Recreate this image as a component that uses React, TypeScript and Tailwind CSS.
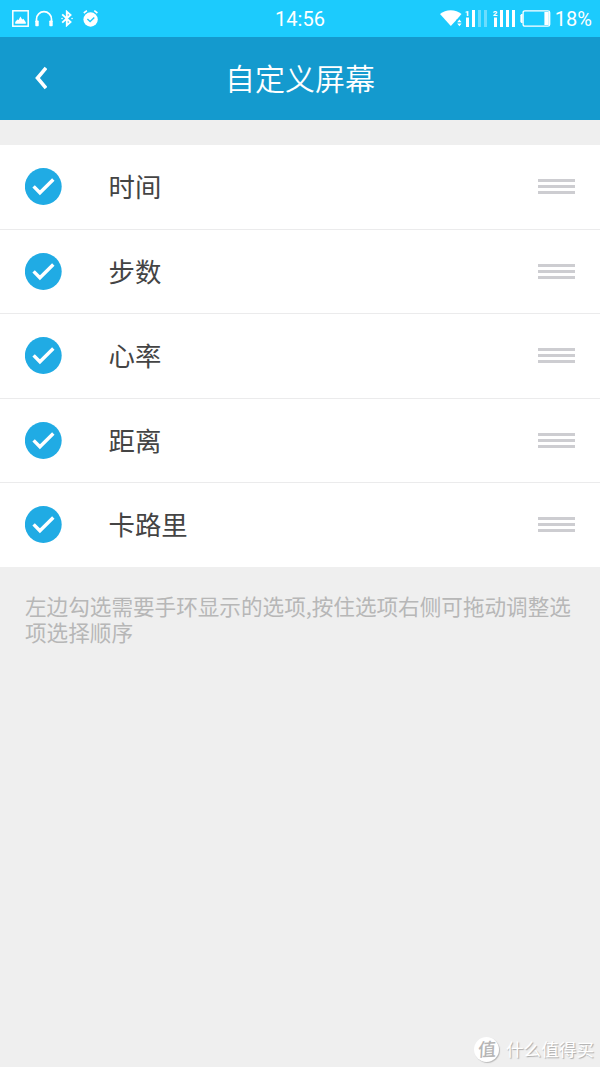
const OPTIONS = [
  { id: "time", label: "时间" },
  { id: "steps", label: "步数" },
  { id: "heart", label: "心率" },
  { id: "distance", label: "距离" },
  { id: "calories", label: "卡路里" },
];

const PictureIcon = () => (
  <svg className="w-[17px] h-[17px]" viewBox="0 0 17 17" fill="none">
    <rect x="0.8" y="0.8" width="15.4" height="15.4" stroke="white" strokeWidth="1.5" />
    <path d="M3.2 13.8V12l2.2-2.6 1.2.6L8.4 6.6l1.8 2.8 1.2-.6 2.4 3.4v1.6z" fill="white" />
  </svg>
);

const HeadphonesIcon = () => (
  <svg className="w-[18px] h-[17px]" viewBox="0 0 18 17" fill="none">
    <path d="M1.5 12V9.2a7.5 7.5 0 0 1 15 0V12" stroke="white" strokeWidth="1.7" />
    <rect x="0.3" y="10.4" width="3.4" height="5.8" rx="0.8" fill="white" />
    <rect x="14.3" y="10.4" width="3.4" height="5.8" rx="0.8" fill="white" />
  </svg>
);

const BluetoothIcon = () => (
  <svg className="w-3 h-[17px]" viewBox="0 0 12 17" fill="none" stroke="white" strokeWidth="1.9">
    <path d="M1.2 4.4l8.3 7.7-3.7 3.2V1.7l3.7 3.2-8.3 7.7" />
    <path d="M1 8.5h.1M11 8.5h.1" strokeLinecap="round" strokeWidth="1.5" />
  </svg>
);

const AlarmIcon = () => (
  <svg className="w-4 h-[17px]" viewBox="0 0 16 17" fill="none">
    <circle cx="7.6" cy="9.5" r="7.2" fill="white" />
    <path d="M.8 3L3.9.7M14.4 3L11.3.7" stroke="white" strokeWidth="1.6" />
    <path d="M4.4 9l2.7 2.5 4.2-4" stroke="#1ccbfd" strokeWidth="1.4" />
  </svg>
);

const WifiIcon = () => (
  <svg className="w-[22px] h-[17px]" viewBox="0 0 22 17" fill="white">
    <path d="M0 4C5.5-1.1 16-1.1 21.5 4L16.8 9.4 10.8 16z" />
    <path d="M16.6 9.2h6v8h-6z" fill="#1ccbfd" />
    <path d="M17.2 12.2l2.2-2.8 2.2 2.8zM17.2 13.4l2.2 2.8 2.2-2.8z" />
  </svg>
);

const SignalIcon = ({ slot, level }: { slot: string; level: number }) => (
  <svg className="w-[23px] h-[17px] overflow-visible" viewBox="0 0 23 17" fill="white">
    <text x="-0.3" y="6" fontSize="8" fontWeight="900" fontFamily="Roboto, sans-serif">
      {slot}
    </text>
    <rect x="1" y="7.5" width="3" height="9.5" />
    {[2, 3, 4].map((bar) => (
      <rect key={bar} x={bar * 6 - 5} y="0" width="3" height="17" opacity={bar <= level ? 1 : 0.35} />
    ))}
  </svg>
);

const BatteryIcon = () => (
  <svg className="w-[31px] h-[17px]" viewBox="0 0 31 17" fill="none">
    <rect x="3.1" y="0.8" width="26.6" height="15.4" rx="1.8" stroke="white" strokeWidth="1.3" />
    <path d="M2.6 4H1.3L.4 5.2v6.6L1.3 13h1.3z" fill="white" />
    <rect x="24.4" y="2" width="4.4" height="13" fill="white" />
  </svg>
);

const StatusBar = () => (
  <div className="h-[37px] grid grid-cols-[1fr_auto_1fr] items-center bg-[#1ccbfd] pl-3 pr-2 font-[Roboto,sans-serif] text-[20px] leading-none text-white">
    <div className="flex items-center">
      <PictureIcon />
      <div className="ml-1.5">
        <HeadphonesIcon />
      </div>
      <div className="ml-2">
        <BluetoothIcon />
      </div>
      <div className="ml-[10px]">
        <AlarmIcon />
      </div>
    </div>
    <span className="mr-1">14:56</span>
    <div className="flex items-center justify-end">
      <WifiIcon />
      <div className="ml-[3px]">
        <SignalIcon slot="1" level={2} />
      </div>
      <div className="ml-[5px]">
        <SignalIcon slot="2" level={4} />
      </div>
      <div className="ml-1">
        <BatteryIcon />
      </div>
      <span className="ml-1">18%</span>
    </div>
  </div>
);

const OptionRow = ({ label }: { label: string }) => (
  <li className="h-[84.5px] flex items-center border-b-[1.5px] border-[#ebebec] px-[25px] last:h-[83.5px] last:border-b-0">
    <svg className="w-[37px] h-[37px]" viewBox="0 0 37 37" fill="none">
      <circle cx="18.3" cy="18.5" r="18.4" fill="#20abe4" />
      <path d="M8.6 18.4l6.3 6.4 13.4-13.3" stroke="white" strokeWidth="3.4" />
    </svg>
    <span className="ml-[46.5px] flex-1 pb-px text-[26.4px] text-[#444444]">{label}</span>
    <div className="flex w-[37px] flex-col gap-[3px]">
      <div className="h-[3px] bg-[#cdcdd1]" />
      <div className="h-[3px] bg-[#cdcdd1]" />
      <div className="h-[3px] bg-[#cdcdd1]" />
    </div>
  </li>
);

export default function App() {
  return (
    <div className="h-[1067px] w-[600px] flex flex-col overflow-hidden bg-[#efefef] font-['Noto_Sans_CJK_SC',sans-serif]">
      <StatusBar />
      <header className="h-[83px] grid grid-cols-[1fr_auto_1fr] items-center bg-[#149ace] text-white">
        <svg className="mb-px ml-[35px] w-3 h-6" viewBox="0 0 12 24" fill="none">
          <path d="M11 2L2.5 12 11 22" stroke="white" strokeWidth="3.6" />
        </svg>
        <h1 className="pb-[3px] text-[30px] font-[350] leading-none">自定义屏幕</h1>
      </header>

      <ul className="mt-[25px] bg-white">
        {OPTIONS.map((option) => (
          <OptionRow key={option.id} label={option.label} />
        ))}
      </ul>

      <p className="mt-[26.5px] px-[25px] text-[21.6px] leading-[26px] text-[#b7b7b7] [line-break:anywhere]">
        左边勾选需要手环显示的选项,按住选项右侧可拖动调整选项选择顺序
      </p>

      {/* Watermark */}
      <div className="mt-auto mb-[5px] mr-[6px] flex items-center justify-end gap-[7px]">
        <div className="flex h-[25px] w-[25px] items-center justify-center rounded-full bg-white shadow-[1px_1px_1px_#bbbbbb]">
          <span className="-rotate-3 -skew-x-6 pb-[3px] text-[18px] font-medium leading-none text-[#b5b5b5]">值</span>
        </div>
        <span className="pb-0.5 text-[17.6px] leading-none text-white [text-shadow:1px_1px_1px_#aaaaaa]">什么值得买</span>
      </div>
    </div>
  );
}
